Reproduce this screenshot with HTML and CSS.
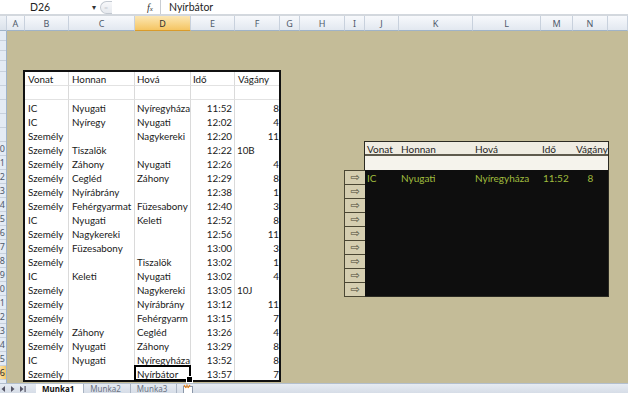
FILE: index.html
```html
<!DOCTYPE html>
<html lang="hu">
<head>
<meta charset="utf-8">
<title>Munka1</title>
<link rel="stylesheet" href="styles.css">
</head>
<body>
<div class="app">
  <div class="fbar">
    <div class="namebox">D26</div>
    <div class="nbarrow">▾</div>
    <div class="fbtns"><span class="knob">=</span></div>
    <div class="fx">f<span class="fxsub">x</span></div>
    <div class="fsep"></div>
    <div class="fval">Nyírbátor</div>
  </div>

  <div class="sheet">
    <div class="ch corner"></div>
    <div class="ch">A</div>
    <div class="ch">B</div>
    <div class="ch">C</div>
    <div class="ch sel">D</div>
    <div class="ch">E</div>
    <div class="ch">F</div>
    <div class="ch">G</div>
    <div class="ch">H</div>
    <div class="ch">I</div>
    <div class="ch">J</div>
    <div class="ch">K</div>
    <div class="ch">L</div>
    <div class="ch">M</div>
    <div class="ch">N</div>
    <div class="ch"></div>

    <div class="rows">
      <div class="rh s10"></div>
      <div class="rh s10"></div>
      <div class="rh s10"></div>
      <div class="rh s11"></div>
      <div class="rh"></div>
      <div class="rh"></div>
      <div class="rh"></div>
      <div class="rh"></div>
      <div class="rh"></div>
      <div class="rh">0</div>
      <div class="rh">1</div>
      <div class="rh">2</div>
      <div class="rh">3</div>
      <div class="rh">4</div>
      <div class="rh">5</div>
      <div class="rh">6</div>
      <div class="rh">7</div>
      <div class="rh">8</div>
      <div class="rh">9</div>
      <div class="rh">0</div>
      <div class="rh">1</div>
      <div class="rh">2</div>
      <div class="rh">3</div>
      <div class="rh">4</div>
      <div class="rh">5</div>
      <div class="rh sel">6</div>
      <div class="rh"></div>
    </div>

    <div class="tbl1">
      <div class="c hb">Vonat</div><div class="c hb">Honnan</div><div class="c hb">Hová</div><div class="c hb">Idő</div><div class="c hb">Vágány</div>
      <div class="c hb"></div><div class="c hb"></div><div class="c hb"></div><div class="c hb"></div><div class="c hb"></div>
      <div class="c">IC</div><div class="c">Nyugati</div><div class="c">Nyíregyháza</div><div class="c r">11:52</div><div class="c r">8</div>
      <div class="c">IC</div><div class="c">Nyíregy</div><div class="c">Nyugati</div><div class="c r">12:02</div><div class="c r">4</div>
      <div class="c">Személy</div><div class="c"></div><div class="c">Nagykereki</div><div class="c r">12:20</div><div class="c r">11</div>
      <div class="c">Személy</div><div class="c">Tiszalök</div><div class="c"></div><div class="c r">12:22</div><div class="c l">10B</div>
      <div class="c">Személy</div><div class="c">Záhony</div><div class="c">Nyugati</div><div class="c r">12:26</div><div class="c r">4</div>
      <div class="c">Személy</div><div class="c">Cegléd</div><div class="c">Záhony</div><div class="c r">12:29</div><div class="c r">8</div>
      <div class="c">Személy</div><div class="c">Nyírábrány</div><div class="c"></div><div class="c r">12:38</div><div class="c r">1</div>
      <div class="c">Személy</div><div class="c ov">Fehérgyarmat</div><div class="c">Füzesabony</div><div class="c r">12:40</div><div class="c r">3</div>
      <div class="c">IC</div><div class="c">Nyugati</div><div class="c">Keleti</div><div class="c r">12:52</div><div class="c r">8</div>
      <div class="c">Személy</div><div class="c">Nagykereki</div><div class="c"></div><div class="c r">12:56</div><div class="c r">11</div>
      <div class="c">Személy</div><div class="c">Füzesabony</div><div class="c"></div><div class="c r">13:00</div><div class="c r">3</div>
      <div class="c">Személy</div><div class="c"></div><div class="c">Tiszalök</div><div class="c r">13:02</div><div class="c r">1</div>
      <div class="c">IC</div><div class="c">Keleti</div><div class="c">Nyugati</div><div class="c r">13:02</div><div class="c r">4</div>
      <div class="c">Személy</div><div class="c"></div><div class="c">Nagykereki</div><div class="c r">13:05</div><div class="c l">10J</div>
      <div class="c">Személy</div><div class="c"></div><div class="c">Nyírábrány</div><div class="c r">13:12</div><div class="c r">11</div>
      <div class="c">Személy</div><div class="c"></div><div class="c">Fehérgyarm</div><div class="c r">13:15</div><div class="c r">7</div>
      <div class="c">Személy</div><div class="c">Záhony</div><div class="c">Cegléd</div><div class="c r">13:26</div><div class="c r">4</div>
      <div class="c">Személy</div><div class="c">Nyugati</div><div class="c">Záhony</div><div class="c r">13:29</div><div class="c r">8</div>
      <div class="c">IC</div><div class="c">Nyugati</div><div class="c">Nyíregyháza</div><div class="c r">13:52</div><div class="c r">8</div>
      <div class="c">Személy</div><div class="c"></div><div class="c active">Nyírbátor</div><div class="c r">13:57</div><div class="c r">7</div>
    </div>

    <div class="panel">
      <div class="rt">
        <div class="th">Vonat</div><div class="th">Honnan</div><div class="th">Hová</div><div class="th">Idő</div><div class="th">Vágány</div>
        <div class="tblank"></div>
        <div class="td">IC</div><div class="td">Nyugati</div><div class="td">Nyíregyháza</div><div class="td">11:52</div><div class="td ctr">8</div>
      </div>
      <div class="arrows">
        <div class="arr">⇨</div>
        <div class="arr">⇨</div>
        <div class="arr">⇨</div>
        <div class="arr">⇨</div>
        <div class="arr">⇨</div>
        <div class="arr">⇨</div>
        <div class="arr">⇨</div>
        <div class="arr">⇨</div>
        <div class="arr">⇨</div>
      </div>
    </div>
  </div>

  <div class="tabs">
    <div class="nav">
      <svg width="30" height="8" viewBox="0 0 30 8">
        <path d="M5 1 L1.5 4 L5 7 Z" fill="#556"/>
        <path d="M11 1 L14.5 4 L11 7 Z" fill="#556"/>
        <path d="M20 1 L23.5 4 L20 7 Z" fill="#556"/>
        <rect x="24.5" y="1" width="1.2" height="6" fill="#556"/>
      </svg>
    </div>
    <div class="tab on">Munka1</div>
    <div class="tab">Munka2</div>
    <div class="tab">Munka3</div>
    <div class="tab ins">
      <svg width="14" height="9" viewBox="0 0 14 9">
        <rect x="2.5" y="2.5" width="9" height="7" fill="#fff" stroke="#8a96a8"/>
        <path d="M3 1 L5 4 M6 0.5 L6 3.5 M9 1 L7 4" stroke="#e8841c" stroke-width="1.3"/>
      </svg>
    </div>
  </div>
</div>
</body>
</html>
```

FILE: styles.css
```css
* { box-sizing: border-box; margin: 0; padding: 0; }
html, body { width: 628px; height: 393px; overflow: hidden; background: #fff; }
body { font-family: Lato, "Open Sans", sans-serif; }

.app { display: flex; flex-direction: column; height: 393px; }

/* formula bar */
.fbar {
  flex: none; height: 16px; display: flex; align-items: center;
  background: #fff; border-bottom: 2px solid #d3d8de;
  font-size: 10.5px; color: #1e1e1e;
}
.namebox { width: 92px; padding-left: 30px; }
.nbarrow { width: 8px; font-size: 8px; color: #333; }
.fbtns { width: 47px; height: 14px; display: flex; align-items: center; }
.knob {
  width: 12px; height: 13px; border: 1px solid #c3c9d1; border-right: none;
  border-radius: 7px 0 0 7px; background: linear-gradient(#f7f8fa, #e6e9ee);
  font-size: 7px; color: #c8ccd2; line-height: 11px; padding-left: 3px;
}
.fx { width: 13px; font-family: "Liberation Serif", serif; font-style: italic; font-size: 10px; color: #333; }
.fxsub { font-size: 7px; }
.fsep { width: 1px; height: 14px; background: #c9cdd3; }
.fval { padding-left: 8px; }

/* sheet grid */
.sheet {
  flex: 1; min-height: 0;
  display: grid;
  grid-template-columns: 7px 18px 44px 66px 56px 44px 45px 20px 45px 20px 34px 74px 68px 32px 35px 1fr;
  grid-template-rows: 15px 10px 10px 10px 11px repeat(22, 14px) 1fr;
  background: #c4bc98;
}

.ch {
  background: linear-gradient(#f7f9fc, #e2e8f0);
  border-right: 1px solid #c8d1dd; border-bottom: 1px solid #9fb3c8;
  font-family: "Noto Sans", sans-serif; font-size: 9px; color: #4f5a6b;
  display: flex; align-items: center; justify-content: center;
}
.ch.sel { background: linear-gradient(#fce7b4, #f5c562); border-bottom-color: #d99b2b; color: #2d2d2d; }
.ch.corner { background: linear-gradient(#eef2f7, #dbe2eb); }

.rows {
  grid-column: 1; grid-row: 2 / -1;
  display: flex; flex-direction: column; overflow: hidden;
  background: #e4ebf4; border-right: 1px solid #9fb3c8;
}
.rh {
  flex: none; height: 14px; border-bottom: 1px solid #c8d1dd;
  display: flex; justify-content: flex-end; align-items: center;
  padding-right: 1px; white-space: nowrap;
  font-family: "Noto Sans", sans-serif; font-size: 9px; color: #4f5a6b;
}
.rh.s10 { height: 10px; }
.rh.s11 { height: 11px; }
.rh.sel { background: linear-gradient(90deg, #fbe1a4, #f5c562); color: #2d2d2d; }

/* left table */
.tbl1 {
  grid-column: 3 / 8; grid-row: 6 / 28;
  margin: -2px -1px -2px -2px;
  border: 2px solid #111;
  background: #fff;
  display: grid;
  grid-template-columns: 44px 66px 56px 44px 1fr;
  grid-auto-rows: 14px;
  font-size: 9.8px; color: #1a1a1a;
}
.c {
  padding: 0 2px 0 3px; line-height: 16px; white-space: nowrap; overflow: hidden;
  border-right: 1px solid #dadada;
}
.c:nth-child(5n) { border-right: none; }
.c.hb { border-bottom: 1px solid #e2e2e2; line-height: 15px; }
.c.r { text-align: right; padding-right: 2px; }
.c:nth-child(5n).r { padding-right: 0; }
.c.l { padding-left: 2px; }
.c:nth-child(5n+3) { padding-left: 2px; padding-right: 0; }
.c:nth-child(5n+4) { padding-left: 2px; }
.c.ov { overflow: visible; position: relative; z-index: 1; }
.c.active { position: relative; overflow: visible; z-index: 2; }
.c.active::after {
  content: ""; position: absolute; left: -1px; top: -1px; right: -1px; bottom: -1px;
  border: 2px solid #000;
}
.c.active::before {
  content: ""; position: absolute; right: -3px; bottom: -3px; width: 5px; height: 5px;
  background: #000; border: 1px solid #fff; z-index: 3;
}

/* right panel */
.panel {
  grid-column: 10 / 16; grid-row: 11 / 22;
  display: grid;
  grid-template-columns: 20px 1fr;
  grid-template-rows: 28px 1fr;
}
.rt {
  grid-column: 2; grid-row: 1 / 3;
  margin: -1px -1px -1px -1px;
  border: 1px solid #2b2a22;
  background: #0e0e0e;
  display: grid;
  grid-template-columns: 34px 74px 68px 32px 35px;
  grid-template-rows: 14px 14px 14px;
  align-content: start;
  font-size: 10px;
}
.th {
  background: #efece2; color: #1f1f1f; line-height: 14px; padding-left: 2px;
  border-bottom: 2px solid #5e5a4d; white-space: nowrap; overflow: hidden;
}
.th:nth-child(4) { padding-left: 1px; }
.th:nth-child(5) { padding-left: 3px; }
.tblank { grid-column: 1 / -1; background: #f5f3ec; }
.td { color: #a0bd3e; line-height: 16px; padding-left: 2px; white-space: nowrap; }
.td.ctr { text-align: center; padding-left: 0; }

.arrows {
  grid-column: 1; grid-row: 2;
  margin: 0 0 -1px -1px;
  display: flex; flex-direction: column;
  border-left: 1px solid #4b4733; border-top: 1px solid #4b4733;
}
.arr {
  height: 14px; background: #d5ceb0; border-bottom: 1px solid #4b4733;
  font-family: "DejaVu Sans", sans-serif; font-size: 11px; color: #4a4636;
  display: flex; align-items: center; justify-content: center; line-height: 12px;
}

/* sheet tabs */
.tabs {
  flex: none; height: 10px; display: flex; align-items: flex-start;
  background: linear-gradient(#e6ebf2, #d6dde7); border-top: 1px solid #b3bfcd;
  font-family: "Noto Sans", sans-serif; font-size: 8px; color: #6a7282;
}
.nav { width: 36px; padding-top: 0; }
.tab {
  height: 9px; line-height: 9px; padding: 0 9px 0 6px;
  border-right: 1px solid #a9b4c3;
}
.tab.on { background: #fff; color: #111; font-weight: bold; }
.tab.ins { border-right: none; padding: 0 4px; }
```
